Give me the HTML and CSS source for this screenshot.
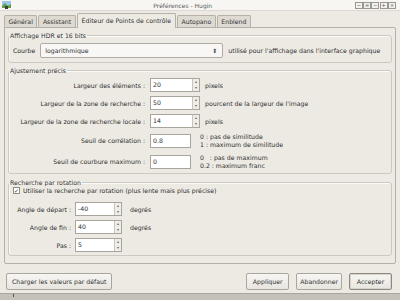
FILE: index.html
```html
<!DOCTYPE html>
<html lang="fr">
<head>
    <meta charset="UTF-8">
    <title>Préférences - Hugin</title>
    <link rel="stylesheet" href="styles.css">
</head>
<body>
    <div class="window">
        <div class="titlebar">
            <svg class="app-icon" width="9" height="8" viewBox="0 0 9 8">
                <rect x="0" y="0" width="9" height="7" fill="#9cc7e8"/>
                <path d="M0 5 L3 2 L6 5 L9 3 L9 7 L0 7 Z" fill="#5e9e46"/>
                <rect x="3" y="5" width="3" height="3" fill="#3c3c3c"/>
            </svg>
            <span class="title">Préférences - Hugin</span>
            <div class="wm-buttons">
                <span class="wm-btn">−</span>
                <span class="wm-btn">=</span>
                <span class="wm-btn">−</span>
                <span class="wm-btn">+</span>
                <span class="wm-btn">×</span>
            </div>
        </div>

        <div class="dialog">
            <div class="tabs">
                <div class="tab">Général</div>
                <div class="tab">Assistant</div>
                <div class="tab active">Éditeur de Points de contrôle</div>
                <div class="tab">Autopano</div>
                <div class="tab">Enblend</div>
            </div>

            <div class="panel">
                <fieldset class="group group-hdr">
                    <legend>Affichage HDR et 16 bits</legend>
                    <div class="hdr-row">
                        <span class="label">Courbe</span>
                        <div class="combo">
                            <span>logarithmique</span>
                            <span class="combo-arrow">⬍</span>
                        </div>
                        <span class="note">utilisé pour l'affichage dans l'interface graphique</span>
                    </div>
                </fieldset>

                <fieldset class="group group-fine">
                    <legend>Ajustement précis</legend>
                    <div class="form-grid">
                        <span class="flabel">Largeur des éléments :</span>
                        <div class="spin"><span class="spin-value">20</span><span class="spin-btns"><i>▴</i><i>▾</i></span></div>
                        <span class="unit">pixels</span>

                        <span class="flabel">Largeur de la zone de recherche :</span>
                        <div class="spin"><span class="spin-value">50</span><span class="spin-btns"><i>▴</i><i>▾</i></span></div>
                        <span class="unit">pourcent de la largeur de l'image</span>

                        <span class="flabel">Largeur de la zone de recherche locale :</span>
                        <div class="spin"><span class="spin-value">14</span><span class="spin-btns"><i>▴</i><i>▾</i></span></div>
                        <span class="unit">pixels</span>

                        <span class="flabel">Seuil de corrélation :</span>
                        <div class="entry short">0.8</div>
                        <span class="unit two-line">0 : pas de similitude<br>1 : maximum de similitude</span>

                        <span class="flabel">Seuil de courbure maximum :</span>
                        <div class="entry short">0</div>
                        <span class="unit two-line">0&nbsp;&nbsp;&nbsp;: pas de maximum<br>0.2 : maximum franc</span>
                    </div>
                </fieldset>

                <fieldset class="group group-rot">
                    <legend>Recherche par rotation</legend>
                    <label class="check">
                        <span class="checkbox">✓</span>
                        Utiliser la recherche par rotation (plus lente mais plus précise)
                    </label>
                    <div class="rot-grid">
                        <span class="flabel">Angle de départ :</span>
                        <div class="spin"><span class="spin-value">-40</span><span class="spin-btns"><i>▴</i><i>▾</i></span></div>
                        <span class="unit">degrés</span>

                        <span class="flabel">Angle de fin :</span>
                        <div class="spin"><span class="spin-value">40</span><span class="spin-btns"><i>▴</i><i>▾</i></span></div>
                        <span class="unit">degrés</span>

                        <span class="flabel">Pas :</span>
                        <div class="spin"><span class="spin-value">5</span><span class="spin-btns"><i>▴</i><i>▾</i></span></div>
                        <span class="unit"></span>
                    </div>
                </fieldset>
            </div>

            <div class="button-row">
                <button class="btn wide">Charger les valeurs par défaut</button>
                <div class="spacer"></div>
                <button class="btn">Appliquer</button>
                <button class="btn">Abandonner</button>
                <button class="btn default">Accepter</button>
            </div>
        </div>
        <div class="bottom-edge"><span class="edge-mark"></span></div>
    </div>
</body>
</html>
```

FILE: styles.css
```css
* {
    margin: 0;
    padding: 0;
    box-sizing: border-box;
}

body {
    font-family: 'DejaVu Sans', Verdana, sans-serif;
    font-size: 6.2px;
    color: #2e2e2e;
    background: #edeae4;
    width: 400px;
    height: 300px;
    overflow: hidden;
}

.window {
    width: 400px;
    height: 300px;
    display: flex;
    flex-direction: column;
}

.titlebar {
    height: 11px;
    background: #f7f6f3;
    border-bottom: 1px solid #dcd9d2;
    display: flex;
    align-items: center;
    padding: 0 2px;
}

.app-icon {
    display: block;
}

.title {
    flex: 1;
    text-align: center;
    color: #5a5a5a;
    font-size: 6px;
}

.wm-buttons {
    display: flex;
    margin-right: 2px;
}

.wm-btn {
    width: 8px;
    height: 7px;
    border: 1px solid #9a978f;
    background: #f2f1ee;
    font-size: 5px;
    line-height: 5px;
    text-align: center;
    color: #555;
    margin-left: 0.3px;
}

.dialog {
    flex: 1;
    display: flex;
    flex-direction: column;
    padding: 2px 4px 0 4px;
}

.tabs {
    display: flex;
    align-items: flex-end;
    height: 14px;
    position: relative;
    z-index: 1;
}

.tab {
    height: 12px;
    padding: 0 3.5px;
    line-height: 11px;
    background: #dedad2;
    border: 1px solid #b5b1a8;
    border-bottom: none;
    border-radius: 2px 2px 0 0;
    margin-right: 1px;
    color: #333;
}

.tab.active {
    height: 15px;
    line-height: 14px;
    background: #edeae4;
    margin-bottom: -1px;
    padding: 0 4px;
}

.panel {
    height: 237px;
    border: 1px solid #b5b1a8;
    border-radius: 0 2px 2px 2px;
    padding: 4px 3px 4px 3px;
    display: flex;
    flex-direction: column;
    gap: 4px;
}

.group {
    border: 1px solid #cdc9c1;
    border-radius: 3px;
    padding: 0 4px 3px 4px;
    box-shadow: inset 1px 1px 0 #fbfaf8;
}

.group legend {
    padding: 0 1px;
    margin-left: -4px;
    color: #2e2e2e;
}

.group-hdr {
    padding-bottom: 4px;
}

.group-rot {
    margin-top: 1px;
}

.hdr-row {
    display: flex;
    align-items: center;
    gap: 5px;
    padding-top: 4px;
}

.combo {
    width: 183px;
    height: 15px;
    background: #f8f7f5;
    border: 1px solid #b0aca3;
    border-radius: 2px;
    display: flex;
    align-items: center;
    justify-content: space-between;
    padding: 0 5px 0 4px;
}

.combo-arrow {
    font-size: 6px;
    color: #555;
}

.note {
    white-space: nowrap;
}

.form-grid {
    display: grid;
    grid-template-columns: 132px 50px 1fr;
    grid-template-rows: 14px 14px 14px 17px 17px;
    column-gap: 5px;
    row-gap: 4px;
    align-items: center;
    padding-top: 4px;
}

.flabel {
    text-align: right;
    white-space: nowrap;
}

.unit {
    white-space: nowrap;
}

.spin {
    height: 14px;
    background: #fff;
    border: 1px solid #a9a59c;
    display: flex;
    align-items: stretch;
    justify-content: space-between;
}

.spin-value {
    padding-left: 2px;
    line-height: 12px;
}

.spin-btns {
    width: 7px;
    border-left: 1px solid #c9c5bd;
    background: #efede8;
    display: flex;
    flex-direction: column;
}

.spin-btns i {
    flex: 1;
    font-style: normal;
    font-size: 4px;
    line-height: 6px;
    text-align: center;
    color: #666;
}

.entry {
    height: 14px;
    background: #fff;
    border: 1px solid #a9a59c;
    line-height: 12px;
    padding-left: 2px;
}

.entry.short {
    width: 41px;
}

.two-line {
    line-height: 7.5px;
    margin-left: -5px;
}

.check {
    display: flex;
    align-items: center;
    gap: 3px;
    height: 8px;
}

.checkbox {
    width: 7px;
    height: 7px;
    border: 1px solid #8f8b83;
    background: #fff;
    font-size: 6px;
    line-height: 5px;
    text-align: center;
}

.rot-grid {
    display: grid;
    grid-template-columns: 58px 47px 1fr;
    grid-template-rows: 14px 14px 14px;
    column-gap: 4px;
    row-gap: 4px;
    align-items: center;
    padding-top: 8px;
}

.rot-grid .unit {
    padding-left: 4px;
}

.button-row {
    display: flex;
    align-items: center;
    gap: 7px;
    padding: 9px 4px 0 2px;
}

.spacer {
    flex: 1;
}

.btn {
    font-family: inherit;
    font-size: 6.2px;
    color: #2e2e2e;
    height: 17px;
    min-width: 43px;
    padding: 0 3px;
    background: linear-gradient(#f7f6f3, #e8e5df);
    border: 1px solid #aaa69d;
    border-radius: 2px;
}

.btn.wide {
    padding: 0 5px;
}

.btn.default {
    border: 1px solid #8d8980;
    box-shadow: inset 0 0 0 1px #d8d4cc;
}

.bottom-edge {
    height: 7px;
    background: #c4c1bb;
    border-top: 1px solid #a9a69f;
    padding-left: 13px;
}

.edge-mark {
    display: block;
    width: 1px;
    height: 3px;
    background: #555;
}
```
